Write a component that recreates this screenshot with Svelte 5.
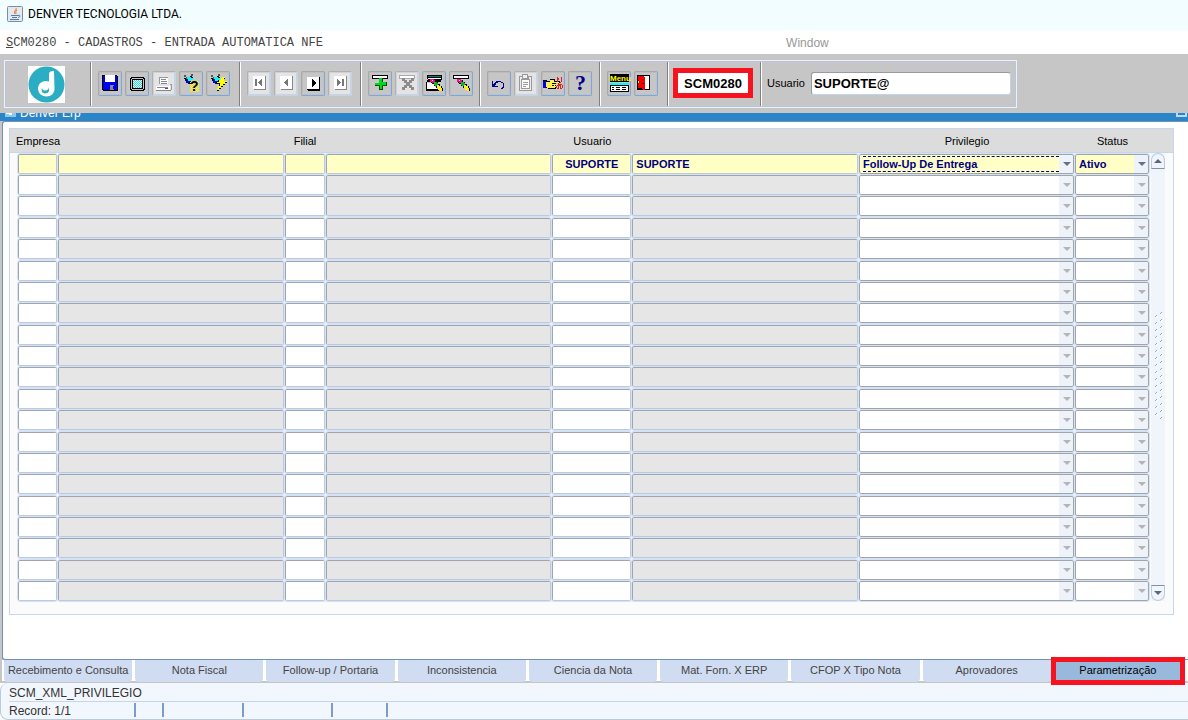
<script>
	let code = $state('SCM0280');
	let user = $state('SUPORTE@');
	let activeTab = $state('Parametrização');

	const tabs = [
		'Recebimento e Consulta',
		'Nota Fiscal',
		'Follow-up / Portaria',
		'Inconsistencia',
		'Ciencia da Nota',
		'Mat. Forn. X ERP',
		'CFOP X Tipo Nota',
		'Aprovadores',
		'Parametrização'
	];

	const groups = [
		[
			{ icon: 'save', label: 'Salvar' },
			{ icon: 'screen', label: 'Tela' },
			{ icon: 'print', label: 'Imprimir', off: true },
			{ icon: 'query', label: 'Entrar consulta' },
			{ icon: 'run', label: 'Executar consulta' }
		],
		[
			{ icon: 'first', label: 'Primeiro', off: true },
			{ icon: 'prev', label: 'Anterior', off: true },
			{ icon: 'next', label: 'Proximo' },
			{ icon: 'last', label: 'Ultimo', off: true }
		],
		[
			{ icon: 'add', label: 'Inserir' },
			{ icon: 'remove', label: 'Excluir', off: true },
			{ icon: 'clearBlock', label: 'Limpar bloco' },
			{ icon: 'clearRow', label: 'Limpar registro' }
		],
		[
			{ icon: 'undo', label: 'Desfazer' },
			{ icon: 'paste', label: 'Colar', off: true },
			{ icon: 'list', label: 'Lista de valores' },
			{ icon: 'help', label: 'Ajuda' }
		],
		[
			{ icon: 'menu', label: 'Menu' },
			{ icon: 'exit', label: 'Sair' }
		]
	];

	// each shape is [fill, path] on the 24px button
	const lamp = [
		['#555', 'M5 4h2v2h2v2H7V6H5zM12 3h2v2h-2z'],
		['#00ffff', 'M8 6h4v1h2v2h-2v1H9V8H8z'],
		['#0000c0', 'M6 8h3v2h3v1h-2v2H9v-1H7v-2H6z'],
		['#000', 'M5 7h2v1h1v2H7V9H6V8H5zM11 5h2v1h1v1h-2V6h-1zM10 11h2v2h-2z']
	];
	const brush = [
		['#000', 'M8 8h4v1h2v2h2v2h2v2h2v2h1v3h-3v-1h-2v-2h-2v-2h-2v-2h-2v-1H9v-2H8z'],
		['#ff0090', 'M8 8h4v1h1v3h-3v-1H8z'],
		['#fff', 'M10 9h1v1h-1z'],
		['#00c020', 'M12 11h3v1h1v3h-3v-1h-1z'],
		['#ffee22', 'M15 14h2v1h2v2h1v3h-2v-1h-2v-2h-1z']
	];
	const page = [
		['#888', 'M7 5h12v14H7v-1h11V6H7z'],
		['#fff', 'M6 5h12v13H6z']
	];

	const icons = {
		save: [
			['#000', 'M4 4h15v1h1v15H5v-1H4z'],
			['#0000f0', 'M5 5h2v6h10V5h2v14h-3v-5H9v5H6v-1H5z'],
			['#fff', 'M7 4h10v7H7z'],
			['#0000f0', 'M9 14h3v5H9z'],
			['#888', 'M12 14h4v5h-4z'],
			['#0000f0', 'M15 15h1v3h-1z']
		],
		screen: [
			['#000', 'M6 6h13v1h1v12h-1v1H6v-1H5V7h1z'],
			['#c6c6c6', 'M7 7h11v1h1v10h-1v1H7v-1H6V8h1z'],
			['#000', 'M7 8h11v10H7z'],
			['url(#dither)', 'M8 9h9v8H8z']
		],
		print: [
			['#999', 'M7 6h9v7H7zM4 14h15v5h1v-6h-2v1H4z'],
			['#fff', 'M8 7h8v6H8zM4 15h14v4H4z'],
			['#888', 'M9 8h5v1H9zM9 10h6v1H9zM9 12h6v1H9zM5 16h11v1H5zM4 19h15v1H4z'],
			['#555', 'M13 17h3v1h-3z']
		],
		query: [...lamp, ['url(#spark)', 'M11 10h9v11h-9z']],
		run: [
			...lamp,
			['#000', 'M16 7h3v1h-1v2h3v2h-2v2h-2v2h-2v2h-2v2h-2v-3h1v-2h1v-2h-3v-2h2V9h2z'],
			['#ffff00', 'M16 6h3v1h-1v3h3v1h-2v2h-2v2h-2v2h-2v2h-2v-2h1v-2h2v-3h-3v-1h2V9h2z']
		],
		first: [...page, ['#777', 'M8 8h2v7H8zM14 8h1v7h-1zM13 9h1v5h-1zM12 10h1v3h-1zM11 11h1v1h-1z']],
		prev: [...page, ['#777', 'M13 8h1v7h-1zM12 9h1v5h-1zM11 10h1v3h-1zM10 11h1v1h-1z']],
		next: [
			['#000', 'M6 6h13v14H7v-1H6z'],
			['#fff', 'M6 6h12v12H6z'],
			['#000', 'M11 8h1v8h-1zM12 9h1v6h-1zM13 10h1v4h-1zM14 11h1v2h-1z']
		],
		last: [...page, ['#777', 'M9 8h1v7H9zM10 9h1v5h-1zM11 10h1v3h-1zM12 11h1v1h-1zM14 8h2v7h-2z']],
		add: [
			['#000', 'M4 4h16v4H4z'],
			['#fff', 'M5 5h14v2H5z'],
			['#005000', 'M11 7h4v4h4v4h-4v4h-4v-4H7v-3h4z'],
			['#00d820', 'M11 7h3v4h4v3h-4v4h-2v-4H7v-2h4z']
		],
		remove: [
			['#aaa', 'M4 4h16v4H4z'],
			['#fff', 'M5 5h14v2H5z'],
			['#8c8c8c', 'M7 7h3v2h2v2h2V9h2V7h3v3h-2v2h-2v2h2v2h2v3h-3v-2h-2v-2h-2v2h-2v2H7v-3h2v-2h2v-2H9v-2H7z']
		],
		clearBlock: [
			['#000', 'M5 4h15v5h-1v2H4v9h13v-2H5V9h1V8H5z'],
			['#008080', 'M6 5h13v1H6z'],
			['#fff', 'M6 7h13v1H6zM5 12h3l3-3v3l4 6H5z'],
			...brush
		],
		clearRow: [['#000', 'M4 4h16v4H4z'], ['#fff', 'M5 5h14v2H5z'], ...brush],
		undo: [['#00008b', 'M5 10h1v3l2-2h1v-1h5v1h2v1h1v5h-1v1h-2v-1h1v-1h1v-4h-2v-1h-3v1H9v1l-2 2h4v1H5z']],
		paste: [
			['#999', 'M5 5h3V3h6v2h4v15H5z'],
			['#eee', 'M6 6h2v2h7V6h2v13H6zM9 4h4v3H9z'],
			['#999', 'M7 8h9v10H7z'],
			['#fff', 'M8 9h7v8H8z'],
			['#999', 'M9 11h5v1H9zM9 13h5v1H9zM9 15h3v1H9z']
		],
		list: [
			['#000', 'M2 9h4v1h3V8h5v2h5v2h-4v6H7v-1H2z'],
			['#0000e0', 'M2 10h3v7H2z'],
			['#ffee55', 'M5 11h4V9h4v2h5v1h-4v1h1v1h-1v1h1v1h-1v1H6v-1H5z'],
			['#000', 'M11 12h3v1h-3zM11 14h2v1h-2z'],
			['#e02020', 'M16 6h1v1h1v2h-1v2h-1zM20 6h1v5h-1v1h-1v-1h1zM17 12h1v1h3v1h1v3h-1v1h-2v-3h-1v3h-2v-1h-1v-2h1v-1h1zM16 15v2h1v-2zM20 14v3h1v-3z']
		],
		help: [],
		menu: [
			['#000', 'M3 3h19v8H3z'],
			['#00ffff', 'M3 12h19v2H3z'],
			['#000', 'M3 14h19v7H3z'],
			['#fff', 'M4 15h17v5H4z'],
			['#000', 'M5 16h2v1H5zM9 16h4v1H9zM15 16h4v1h-4zM5 18h2v1H5zM9 18h4v1H9zM15 18h4v1h-4z']
		],
		exit: [
			['#000', 'M3 4h13v15H3z'],
			['#fff', 'M10 5h5v13h-5z'],
			['#f00000', 'M4 5h6l1 2v12h-2l-2-2H4z'],
			['#ff0', 'M4 10h1v2H4z'],
			['#700', 'M8 12h2v1H8z']
		]
	};

	const first = { user: 'SUPORTE', name: 'SUPORTE', privilege: 'Follow-Up De Entrega', status: 'Ativo' };
	const blank = { user: '', name: '', privilege: '', status: '' };
	let rows = $state([first, ...Array.from({ length: 20 }, () => ({ ...blank }))]);
</script>

<svg class="defs" aria-hidden="true">
	<pattern id="dither" width="2" height="2" patternUnits="userSpaceOnUse">
		<path fill="#fff" d="M0 0h2v2H0z" />
		<path fill="#20d8e0" d="M0 0h1v1H0zM1 1h1v1H1z" />
	</pattern>
	<pattern id="spark" width="2" height="2" patternUnits="userSpaceOnUse">
		<path fill="#ff0" d="M0 0h1v1H0zM1 1h1v1H1z" />
	</pattern>
</svg>

<header class="titlebar">
	<svg width="16" height="16" viewBox="0 0 16 16">
		<rect x=".5" y=".5" width="15" height="15" rx="1" fill="#e4e9ee" stroke="#7390a6" />
		<path d="M9 2c1 2-3 3-1 6M10 4c-2 1-1 2-1 4" fill="none" stroke="#e8702a" />
		<path d="M4 9.500h7M5 11.500h5M3 13.500h9M11 9.500c3-1 2 2 0 2" fill="none" stroke="#4d7fa6" />
	</svg>
	<span>DENVER TECNOLOGIA LTDA.</span>
</header>

<nav class="menubar">
	<a class="path" href="#form"><u>S</u>CM0280 - CADASTROS - ENTRADA AUTOMATICA NFE</a>
	<a class="window-menu" href="#window">Window</a>
</nav>

<section class="toolbar">
	<div class="tools">
		<div class="group brand">
			<svg width="37" height="37" viewBox="0 0 37 37">
				<path fill="#fff" d="M0 0h37v37H0z" />
				<circle cx="18.500" cy="18.500" r="18" fill="#2badc4" />
				<path d="M26 5c-4 0-5 1-5 4v6.500c-5-2-11 1-11 7 0 5 4 8 8.500 8s8-3 8-8z" fill="#fff" />
				<path d="M14 21.500c0 2 1 3 3 3 3 0 4-2 4-4v4c0 2-2 3-4 3-3 0-4-3-3-6z" fill="#2badc4" />
			</svg>
		</div>
		{#each groups as group}
			<div class="group">
				{#each group as tool}
					<button class="tool" class:off={tool.off} aria-label={tool.label} title={tool.label} disabled={tool.off}>
						<svg width="24" height="24" viewBox="0 0 24 24" shape-rendering="crispEdges">
							{#each icons[tool.icon] as [fill, d]}
								<path {fill} {d} />
							{/each}
							{#if tool.icon === 'help'}
								<text class="glyph big" x="7" y="19">?</text>
							{:else if tool.icon === 'query'}
								<text class="glyph" x="11" y="20">?</text>
							{:else if tool.icon === 'menu'}
								<text class="glyph menu" x="3" y="10">Menu</text>
							{/if}
						</svg>
					</button>
				{/each}
			</div>
		{/each}
		<div class="group code">
			<input aria-label="Programa" bind:value={code} />
		</div>
		<div class="group user">
			<label for="user">Usuario</label>
			<input id="user" bind:value={user} />
		</div>
	</div>
</section>

<div class="caption">
	<svg width="11" height="11" viewBox="0 0 11 11">
		<path fill="#8cc8ee" d="M0 0h11v11H0z" />
		<path fill="#fff" d="M1 5h3v2h2V4h3v3H7v2H4V8H1z" />
	</svg>
	<span>Denver Erp</span>
	<button class="maximize" aria-label="Maximizar"></button>
</div>

<main>
	<div class="canvas">
		<div class="block">
			<table>
				<colgroup>
					<col class="c-company" /><col /><col class="c-branch" /><col />
					<col class="c-user" /><col /><col class="c-privilege" /><col class="c-status" />
				</colgroup>
				<thead>
					<tr>
						<th class="company" colspan="2">Empresa</th>
						<th class="branch" colspan="2">Filial</th>
						<th>Usuario</th>
						<th></th>
						<th>Privilegio</th>
						<th>Status</th>
					</tr>
				</thead>
				<tbody>
					{#each rows as row, i}
						<tr class:current={i === 0}>
							<td><input aria-label="Empresa" /></td>
							<td><input class="locked" aria-label="Nome da empresa" readonly /></td>
							<td><input aria-label="Filial" /></td>
							<td><input class="locked" aria-label="Nome da filial" readonly /></td>
							<td><input class="center" aria-label="Usuario" bind:value={row.user} /></td>
							<td><input class="locked" aria-label="Nome do usuario" value={row.name} readonly /></td>
							<td>
								<div class="combo" class:focused={i === 0}>
									<select aria-label="Privilegio" disabled={i > 0}><option>{row.privilege}</option></select>
								</div>
							</td>
							<td>
								<div class="combo">
									<select aria-label="Status" disabled={i > 0}><option>{row.status}</option></select>
								</div>
							</td>
						</tr>
					{/each}
				</tbody>
			</table>
			<div class="side">
				<div class="side-head"></div>
				<div class="scrollbar">
					<button class="up" aria-label="Subir"><i></i></button>
					<svg class="grip" width="8" height="108">
						<pattern id="grip" width="10" height="7" patternUnits="userSpaceOnUse">
							<path d="M0 5h1v1H0zM1 4h1v1H1zM5 2h1v1H5zM6 1h1v1H6z" fill="#8fabd0" />
							<path d="M1 6h1v1H1zM2 5h1v1H2zM6 3h1v1H6zM7 2h1v1H7z" fill="#fff" />
						</pattern>
						<rect width="8" height="108" fill="url(#grip)" />
					</svg>
					<button class="down" aria-label="Descer"><i></i></button>
				</div>
			</div>
		</div>
	</div>
	<div class="tabs" role="tablist">
		{#each tabs as tab}
			<button role="tab" aria-selected={tab === activeTab} class:active={tab === activeTab} onclick={() => (activeTab = tab)}>{tab}</button>
		{/each}
	</div>
</main>

<footer>
	<div class="message">SCM_XML_PRIVILEGIO</div>
	<div class="record">
		<span>Record: 1/1</span>
		<span></span>
		<span></span>
		<span></span>
		<span></span>
	</div>
</footer>

<style>
	:global(body) {
		background: #fff;
		font-family: "Liberation Sans", Arial, sans-serif;
		font-size: 11px;
		color: #000;
	}

	button,
	input,
	select {
		box-sizing: border-box;
		margin: 0;
		padding: 0;
		font: inherit;
		color: inherit;
		border-radius: 0;
	}

	svg {
		display: block;
		flex: none;
	}

	.defs {
		position: absolute;
		width: 0;
		height: 0;
	}

	.titlebar {
		display: flex;
		align-items: center;
		gap: 5px;
		box-sizing: border-box;
		height: 30px;
		padding: 0 0 2px 7px;
		background: #f2fdff;
		font-family: Roboto, "Segoe UI", sans-serif;
		font-size: 12px;
	}

	.menubar {
		display: grid;
		grid-template-columns: 66% 1fr;
		align-items: center;
		box-sizing: border-box;
		height: 24px;
		padding: 2px 0 0 6px;
		font-size: 12px;
	}

	.menubar a {
		color: #444;
		text-decoration: none;
	}

	.menubar .path {
		font-family: "Liberation Mono", "Courier New", monospace;
	}

	.menubar .window-menu {
		color: #999;
	}

	.toolbar {
		padding: 6px 4px 5px;
		background: #c6c6c6;
	}

	.tools {
		display: grid;
		grid-template-columns: 86px 149px 121px 119px 120px 68px 93px 1fr;
		box-sizing: border-box;
		max-width: 1013px;
		height: 48px;
		border: 1px solid #eaf1fb;
		outline: 1px solid #b9c6da;
		outline-offset: -2px;
	}

	.group {
		display: flex;
		align-items: center;
		gap: 3px;
		padding: 0 0 2px 7px;
		border-right: 1px solid #808080;
		box-shadow: 1px 0 #fff;
	}

	.group:last-child {
		border: 0;
		box-shadow: none;
	}

	.brand {
		justify-content: center;
		padding: 0 2px 0 0;
	}

	.tool {
		width: 24px;
		height: 25px;
		border: 1px solid;
		border-color: #a8a8a8 #88a4c8 #88a4c8 #a8a8a8;
		border-radius: 2px;
		background: #c6c6c6;
		box-shadow: inset 1px 1px #bdbdbd, inset -1px -1px #b4c4d8;
	}

	.tool svg {
		margin: -1px;
	}

	.tool.off {
		background: #e4e4e4;
		border-color: #b0b0b0 #c3d3ea #c3d3ea #b0b0b0;
		box-shadow: inset 0 0 0 1px #cdd3dc;
	}

	.glyph {
		font: bold 14px "Liberation Sans", Arial, sans-serif;
	}

	.glyph.big {
		font: bold 22px "Liberation Serif", serif;
		fill: #00008b;
	}

	.glyph.menu {
		font-size: 8px;
		fill: #ff0;
	}

	.code {
		padding: 0 0 2px 5px;
	}

	.code input {
		width: 80px;
		height: 30px;
		border: 5px solid #f5131f;
		background: #fff;
		font-size: 13px;
		font-weight: bold;
		text-align: center;
	}

	.user {
		gap: 6px;
		padding: 0 5px 2px 6px;
	}

	.user input {
		flex: 1;
		min-width: 0;
		height: 23px;
		padding: 0 2px;
		border: 1px solid;
		border-color: #969ca6 #c3d3ea #c3d3ea #969ca6;
		border-radius: 3px;
		background: #fff;
		font-size: 13px;
		font-weight: bold;
	}

	.caption {
		display: flex;
		align-items: flex-end;
		gap: 4px;
		height: 8px;
		padding: 0 1px 0 5px;
		overflow: hidden;
		background: #2a86c8;
		color: #fff;
		font-size: 12px;
	}

	.caption svg {
		margin-bottom: 4px;
	}

	.caption span {
		line-height: 12px;
		margin-bottom: 2px;
	}

	.maximize {
		width: 11px;
		height: 11px;
		margin: 0 0 4px auto;
		border: 2px solid #b8dcf4;
		background: #2a86c8;
	}

	main {
		padding-left: 2px;
		background: #c6c6c6;
	}

	.canvas {
		padding: 6px 14px 44px 6px;
		border: 1px solid #7090b8;
		border-right: 0;
		border-radius: 3px 0 0 3px;
		background: #fff;
	}

	.block {
		display: flex;
		box-sizing: border-box;
		height: 487px;
		padding-bottom: 12px;
		border: 1px solid #c6d6ec;
		background: #fbfbfb;
	}

	table {
		flex: 1;
		width: 100%;
		height: 473px;
		border-spacing: 0;
		table-layout: fixed;
	}

	.c-company {
		width: 48px;
	}

	.c-branch {
		width: 41px;
	}

	.c-user {
		width: 80px;
	}

	.c-privilege {
		width: 216px;
	}

	.c-status {
		width: 75px;
	}

	th {
		height: 23px;
		padding: 0;
		border-bottom: 1px solid #c6d6ec;
		background: #dcdcdc;
		font-weight: normal;
	}

	th.company {
		padding-left: 6px;
		text-align: left;
	}

	th.branch {
		padding-left: 9px;
		text-align: left;
	}

	td {
		padding: 0;
		background: #f0f5fc;
	}

	td:first-child {
		padding-left: 8px;
		background: #fbfbfb;
	}

	td input,
	td select {
		display: block;
		width: calc(100% - 1px);
		height: 20px;
		padding: 0 3px;
		border: 1px solid;
		border-color: #a0a5ad #b9cae2 #b9cae2 #a0a5ad;
		border-radius: 2px;
		background: #fff;
		color: #000080;
		font-weight: bold;
		outline: 1px solid #d5e2f3;
		outline-offset: 0;
	}

	td .center {
		text-align: center;
	}

	td .locked {
		background: #e6e6e6;
	}

	.current input,
	.current select {
		background-color: #ffffc6;
	}

	.combo {
		display: grid;
		grid-template-columns: 1fr 15px 1px;
		align-items: center;
	}

	.combo select {
		grid-area: 1 / 1 / 2 / 3;
		width: 100%;
		appearance: none;
		border-color: #a0a5ad;
		opacity: 1;
		background-image: linear-gradient(#eef3fa, #eef3fa);
		background-position: right;
		background-size: 14px 100%;
		background-repeat: no-repeat;
	}

	.combo::after {
		content: "";
		grid-area: 1 / 2 / 2 / 3;
		justify-self: center;
		z-index: 1;
		border: 4px solid transparent;
		border-top-color: #b4b4b4;
		border-bottom: 0;
		pointer-events: none;
	}

	.current .combo::after {
		border-top-color: #66708c;
	}

	.combo.focused::before {
		content: "";
		grid-area: 1 / 1 / 2 / 2;
		z-index: 1;
		height: 14px;
		margin-left: 4px;
		border: 1px dashed #000080;
		border-width: 1px 0;
		pointer-events: none;
	}

	.side {
		display: flex;
		flex-direction: column;
		width: 23px;
	}

	.side-head {
		height: 23px;
		border-bottom: 1px solid #c6d6ec;
		background: #dcdcdc;
	}

	.scrollbar {
		display: flex;
		flex: 1;
		flex-direction: column;
		align-items: center;
		justify-content: space-between;
		width: 14px;
		margin: 0 0 1px 1px;
		background: #f0f5fc;
	}

	.scrollbar button {
		display: grid;
		place-items: center;
		width: 14px;
		height: 16px;
		border: 1px solid #b9cae2;
		background: #f0f5fc;
	}

	.scrollbar .up {
		border-bottom-color: #7f90ac;
		border-radius: 7px 7px 0 0;
	}

	.scrollbar .down {
		border-top-color: #7f90ac;
		border-radius: 0 0 7px 7px;
	}

	.scrollbar i {
		border: 4px solid transparent;
		border-top: 0;
		border-bottom-color: #5c6684;
	}

	.scrollbar .down i {
		transform: rotate(180deg);
	}

	.grip {
		margin: 0 0 24px 2px;
	}

	.tabs {
		display: flex;
		gap: 3px;
		padding: 0 6px 1px 2px;
		background: linear-gradient(#fff 21px, #c6c6c6 21px);
	}

	.tabs button {
		flex: 1 1 0;
		height: 22px;
		padding-bottom: 2px;
		border: 0;
		border-radius: 0 0 4px 4px;
		background: #d0dcf2;
		color: #444;
		white-space: nowrap;
	}

	.tabs .active {
		border-radius: 0;
		outline: 5px solid #f5131f;
		outline-offset: -2px;
		background: #98b8dc;
		color: #000;
	}

	footer {
		padding-left: 8px;
		border: 1px solid #b9cae2;
		border-width: 0 0 1px 1px;
		border-radius: 8px 0 0 8px;
		background: #f2f6fd;
		color: #333;
		font-size: 12px;
	}

	.message {
		height: 18px;
		border-bottom: 1px solid #c6d6ec;
		line-height: 21px;
	}

	.record {
		display: grid;
		grid-template-columns: 127px 28px 80px 89px 55px;
		height: 16px;
		padding-top: 1px;
		line-height: 17px;
	}

	.record span {
		height: 14px;
		border-right: 2px solid #7f9cc4;
	}
</style>
